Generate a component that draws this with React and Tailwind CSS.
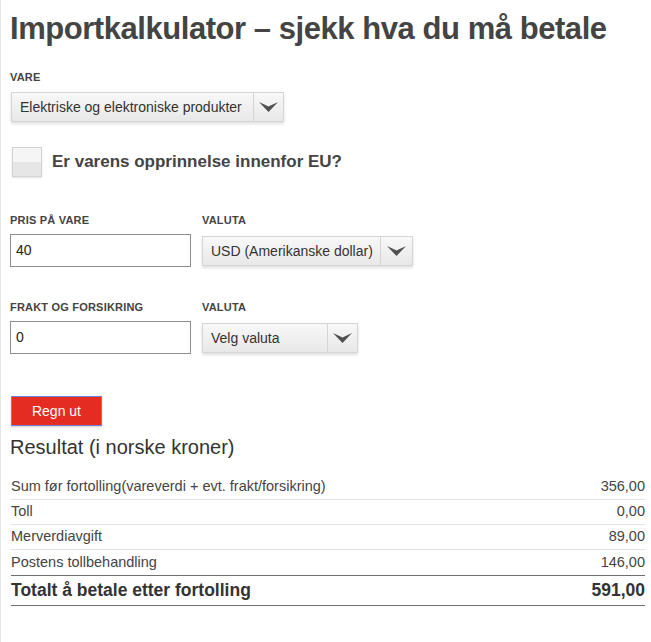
import React from 'react';

const font = { fontFamily: '"Liberation Sans", Arial, sans-serif' };

function Chevron() {
  return (
    <svg width="19" height="10" viewBox="0 0 19 10" className="block">
      <path d="M0 0 L9.5 4.5 L19 0 L9.5 10 Z" fill="#505050" />
    </svg>
  );
}

// fake native-looking select box
function SelectBox({ label, width, arrowWidth }) {
  return (
    <div
      className={`flex h-[30px] border border-[#d5d5d5] bg-gradient-to-b from-[#f8f8f8] to-[#e8e8e8] shadow-[0_2px_3px_rgba(0,0,0,0.13)] ${width}`}
    >
      <div className="flex-1 flex items-center pl-[8px] pr-[7px] text-[14px] text-[#333] whitespace-nowrap">
        {label}
      </div>
      <div className={`flex items-center justify-center border-l border-[#d5d5d5] ${arrowWidth}`}>
        <Chevron />
      </div>
    </div>
  );
}

function FieldLabel({ children }) {
  return (
    <div className="text-[11px] leading-[13px] font-bold uppercase text-[#444] tracking-[0.2px]">
      {children}
    </div>
  );
}

const rows = [
  { label: 'Sum før fortolling(vareverdi + evt. frakt/forsikring)', value: '356,00' },
  { label: 'Toll', value: '0,00' },
  { label: 'Merverdiavgift', value: '89,00' },
  { label: 'Postens tollbehandling', value: '146,00' },
];

export default function App() {
  return (
    <div style={font} className="min-h-screen bg-white border-l border-[#e4e4e4] pl-[9px] pr-[6px] text-[#444]">
      <h1 className="pt-[10px] text-[31px] leading-[38px] font-bold text-[#444] tracking-[-0.45px] whitespace-nowrap">
        Importkalkulator – sjekk hva du må betale
      </h1>

      <div className="mt-[23px]">
        <FieldLabel>Vare</FieldLabel>
        <div className="mt-[8px] pl-[1px]">
          <SelectBox label="Elektriske og elektroniske produkter" width="w-[273px]" arrowWidth="w-[30px]" />
        </div>
      </div>

      <div className="mt-[25px] flex items-center pl-[2px]">
        <div className="w-[30px] h-[30px] border border-[#d2d2d2] bg-gradient-to-b from-[#f5f5f5] from-50% to-[#e6e6e6] to-50% shadow-[0_1px_2px_rgba(0,0,0,0.1)]" />
        <span className="ml-[10px] text-[17px] font-bold text-[#444]">Er varens opprinnelse innenfor EU?</span>
      </div>

      <div className="mt-[37px] flex gap-[10px]">
        <div className="w-[181px]">
          <FieldLabel>Pris på vare</FieldLabel>
          <div className="mt-[7px] h-[33px] border border-[#8e8e8e] flex items-center pl-[5px] text-[14px] text-[#222]">40</div>
        </div>
        <div className="pl-[1px]">
          <FieldLabel>Valuta</FieldLabel>
          <div className="mt-[9px]">
            <SelectBox label="USD (Amerikanske dollar)" width="w-[211px]" arrowWidth="w-[32px]" />
          </div>
        </div>
      </div>

      <div className="mt-[34px] flex gap-[10px]">
        <div className="w-[181px]">
          <FieldLabel>Frakt og forsikring</FieldLabel>
          <div className="mt-[7px] h-[33px] border border-[#8e8e8e] flex items-center pl-[5px] text-[14px] text-[#222]">0</div>
        </div>
        <div className="pl-[1px]">
          <FieldLabel>Valuta</FieldLabel>
          <div className="mt-[9px]">
            <SelectBox label="Velg valuta" width="w-[156px]" arrowWidth="w-[30px]" />
          </div>
        </div>
      </div>

      <button className="mt-[42px] ml-[1px] w-[91px] h-[30px] bg-[#e42c22] border border-[#7482d6] text-white text-[14px] shadow-[0_1px_2px_rgba(0,0,0,0.2)]">
        Regn ut
      </button>

      <h2 className="mt-[9px] text-[20px] leading-[24px] text-[#333]">Resultat (i norske kroner)</h2>

      <div className="mt-[16px] pl-[1px]">
        {rows.map((r, i) => (
          <div
            key={i}
            className={`flex justify-between items-center h-[25px] text-[14.5px] text-[#444] ${i < rows.length - 1 ? 'border-b border-[#e2e2e2]' : ''}`}
          >
            <span>{r.label}</span>
            <span>{r.value}</span>
          </div>
        ))}
        <div className="flex justify-between items-center h-[31px] border-t border-b border-[#707070] text-[17.5px] font-bold text-[#333]">
          <span>Totalt å betale etter fortolling</span>
          <span>591,00</span>
        </div>
      </div>
    </div>
  );
}
